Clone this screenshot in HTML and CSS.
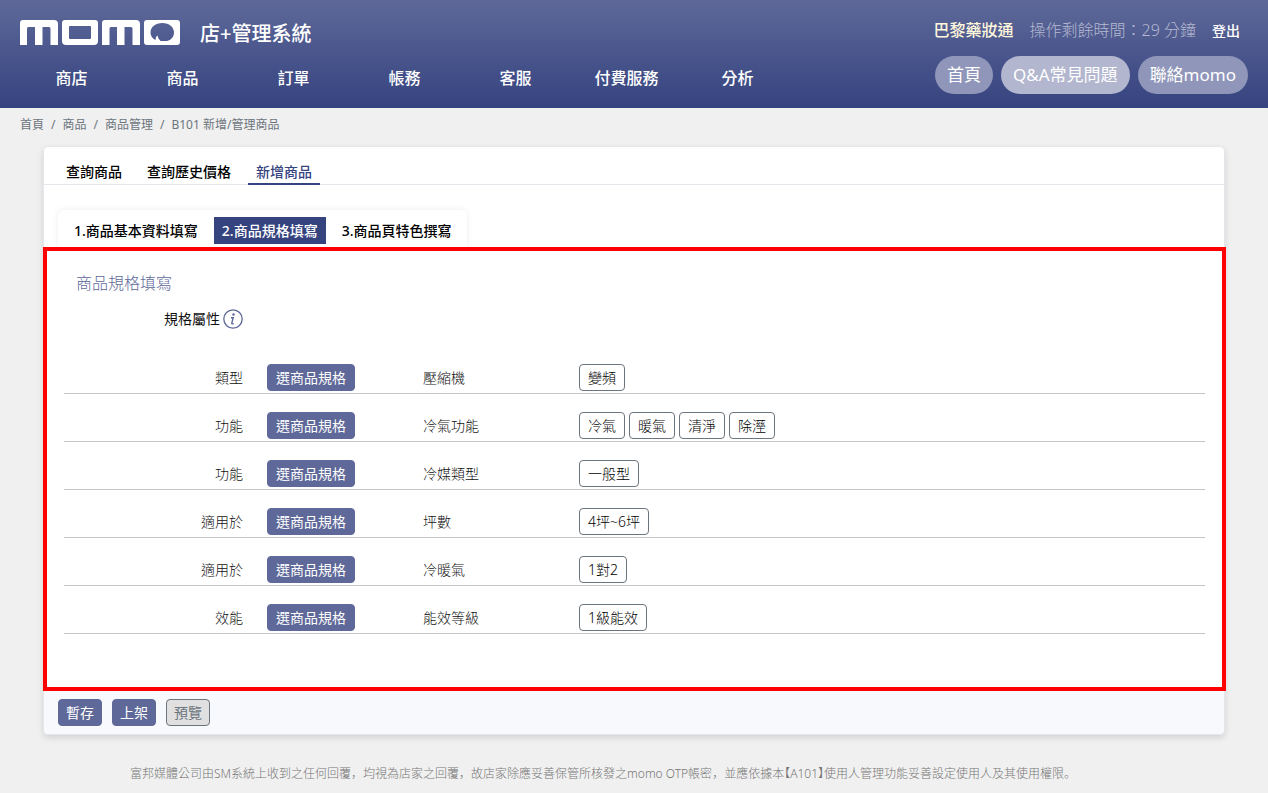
FILE: index.html
```html
<!DOCTYPE html>
<html lang="zh-Hant">
<head>
<meta charset="utf-8">
<meta name="viewport" content="width=device-width, initial-scale=1">
<title>momo 店+管理系統</title>
<link rel="stylesheet" href="styles.css">
</head>
<body>
<header class="header">
  <div class="header-main">
    <div class="brand">
      <svg class="logo" viewBox="0 0 161 25" role="img" aria-label="momo">
        <g fill="#fff" fill-rule="evenodd">
          <path d="M3 0H34Q38 0 38 4V25H30.500V8.500Q30.500 7 29 7H22.500V25H15V7H8.500Q7 7 7 8.500V25H0V3Q0 0 3 0Z"/>
          <path d="M45 0H75Q78 0 78 3V21Q78 25 74 25H46Q42 25 42 21V3Q42 0 45 0ZM50 6Q49 6 49 7V18Q49 19 50 19H70Q71 19 71 18V7Q71 6 70 6Z"/>
          <path d="M85 0H116Q120 0 120 4V25H112.500V8.500Q112.500 7 111 7H104.500V25H97V7H91Q89.500 7 89.500 8.500V25H82V3Q82 0 85 0Z"/>
          <path d="M127 0H157Q160 0 160 3V22Q160 25 157 25H127Q124 25 124 22V3Q124 0 127 0ZM135.500 20L136 17L137.500 15.500L138.500 18.500L140.500 21H147C151 20 154 17 154 12.500C154 7 149 3 142.500 3C135.500 3 130.500 7 130.500 12.500C130.500 16 132.500 18.500 135.500 20Z"/>
        </g>
      </svg>
      <span class="system-name">店+管理系統</span>
    </div>
    <nav class="nav" aria-label="主選單">
      <a href="#">商店</a>
      <a href="#">商品</a>
      <a href="#">訂單</a>
      <a href="#">帳務</a>
      <a href="#">客服</a>
      <a href="#">付費服務</a>
      <a href="#">分析</a>
    </nav>
  </div>
  <div class="header-side">
    <div class="account">
      <span class="shop">巴黎藥妝通</span>
      <span class="timer">操作剩餘時間：29 分鐘</span>
      <a class="logout" href="#">登出</a>
    </div>
    <div class="pills">
      <a class="pill" href="#">首頁</a>
      <a class="pill pill-light" href="#">Q&amp;A常見問題</a>
      <a class="pill" href="#">聯絡momo</a>
    </div>
  </div>
</header>

<nav class="breadcrumb" aria-label="目前位置">
  <a href="#">首頁</a><span>/</span><a href="#">商品</a><span>/</span><a href="#">商品管理</a><span>/</span><a href="#">B101 新增/管理商品</a>
</nav>

<main class="card">
  <nav class="tabs" aria-label="商品功能">
    <a href="#">查詢商品</a>
    <a href="#">查詢歷史價格</a>
    <a class="active" href="#">新增商品</a>
  </nav>
  <nav class="steps" aria-label="新增步驟">
    <a href="#">1.商品基本資料填寫</a>
    <a class="active" href="#">2.商品規格填寫</a>
    <a href="#">3.商品頁特色撰寫</a>
  </nav>
  <section class="spec">
    <h1 class="spec-title">商品規格填寫</h1>
    <div class="attr">
      <span>規格屬性</span>
      <svg class="info" viewBox="0 0 20 20" role="img" aria-label="說明">
        <circle cx="10" cy="10" r="9.200" fill="none" stroke="#5e6899" stroke-width="1.300"/>
        <circle cx="10.500" cy="5.500" r="1.200" fill="#5e6899"/>
        <path d="M8 8.700H10.200L8.800 14.200Q8.700 15.200 10.700 14.600" fill="none" stroke="#5e6899" stroke-width="1.400"/>
      </svg>
    </div>
    <div class="row"><span class="kind">類型</span><span><button class="btn btn-primary" type="button">選商品規格</button></span><span>壓縮機</span><span class="values"><button class="btn" type="button">變頻</button></span></div>
    <div class="row"><span class="kind">功能</span><span><button class="btn btn-primary" type="button">選商品規格</button></span><span>冷氣功能</span><span class="values"><button class="btn" type="button">冷氣</button><button class="btn" type="button">暖氣</button><button class="btn" type="button">清淨</button><button class="btn" type="button">除溼</button></span></div>
    <div class="row"><span class="kind">功能</span><span><button class="btn btn-primary" type="button">選商品規格</button></span><span>冷媒類型</span><span class="values"><button class="btn" type="button">一般型</button></span></div>
    <div class="row"><span class="kind">適用於</span><span><button class="btn btn-primary" type="button">選商品規格</button></span><span>坪數</span><span class="values"><button class="btn" type="button">4坪~6坪</button></span></div>
    <div class="row"><span class="kind">適用於</span><span><button class="btn btn-primary" type="button">選商品規格</button></span><span>冷暖氣</span><span class="values"><button class="btn" type="button">1對2</button></span></div>
    <div class="row"><span class="kind">效能</span><span><button class="btn btn-primary" type="button">選商品規格</button></span><span>能效等級</span><span class="values"><button class="btn" type="button">1級能效</button></span></div>
  </section>
  <div class="actions">
    <button class="btn btn-primary" type="button">暫存</button>
    <button class="btn btn-primary" type="button">上架</button>
    <button class="btn btn-muted" type="button" disabled>預覽</button>
  </div>
</main>

<footer class="footer">富邦媒體公司由SM系統上收到之任何回覆<span class="punct" lang="zh-Hans">，</span>均視為店家之回覆<span class="punct" lang="zh-Hans">，</span>故店家除應妥善保管所核發之momo OTP帳密<span class="punct" lang="zh-Hans">，</span>並應依據本<span class="bracket">【</span>A101<span class="bracket">】</span>使用人管理功能妥善設定使用人及其使用權限<span class="punct" lang="zh-Hans">。</span></footer>
</body>
</html>
```
FILE: styles.css
```css
* { box-sizing: border-box; }

body {
  margin: 0;
  background: #f0f0f0;
  color: #111;
  font: 300 14px/21px "Noto Sans", "Noto Sans CJK TC", sans-serif;
}

a { color: inherit; text-decoration: none; }

.header {
  display: flex;
  justify-content: space-between;
  height: 108px;
  padding: 20px 20px 0 16px;
  background: linear-gradient(#5e6899, #35437f);
  color: #fff;
}

.brand {
  display: flex;
  gap: 19px;
  height: 26px;
  padding-left: 4px;
}

.logo { width: 161px; height: 25px; }

.system-name {
  font-size: 20px;
  font-weight: 500;
  line-height: 28px;
}

.nav { display: flex; padding-top: 20px; }

.nav a {
  width: 111px;
  text-align: center;
  font-size: 16px;
  font-weight: 500;
  line-height: 24px;
}

.account {
  display: flex;
  justify-content: flex-end;
  gap: 16px;
  padding-right: 8px;
  font-size: 16px;
  line-height: 21px;
}

.shop { color: #fff8dc; font-weight: 500; }
.timer { color: #b4b9d0; }
.logout { font-size: 14px; font-weight: 500; }

.pills {
  display: flex;
  justify-content: flex-end;
  gap: 8px;
  padding-top: 15px;
}

.pill {
  padding: 0 12px;
  border-radius: 19px;
  background: #8f96b9;
  font-size: 17px;
  font-weight: 400;
  line-height: 38px;
}

.pill-light { background: #b2b6ce; }

.breadcrumb {
  display: flex;
  gap: 7px;
  padding: 8px 20px 12px;
  color: #6c757d;
  font-size: 12px;
  font-weight: 400;
  line-height: 18px;
}

.card {
  margin: 0 43px;
  border: 1px solid #e4e6ec;
  border-radius: 5px;
  background: #fff;
  box-shadow: 0 3px 6px #0000001f;
}

.tabs {
  display: flex;
  gap: 9px;
  padding: 14px 14px 0;
  border-bottom: 1px solid #e4e6ec;
  color: #000;
  font-weight: 500;
}

.tabs a {
  margin-bottom: -1px;
  padding: 0 8px 1px;
  border-bottom: 2px solid transparent;
}

.tabs .active { border-color: #35437f; color: #35437f; }

.steps {
  display: flex;
  gap: 8px;
  width: fit-content;
  margin: 25px 0 0 14px;
  padding: 7px 8px 3px;
  border-radius: 6px 6px 0 0;
  box-shadow: 0 0 6px #00000014;
  color: #000;
  font-weight: 500;
}

.steps a { padding: 0 8px; line-height: 27px; }
.steps .active { background: #35437f; color: #fff; }

.spec {
  position: relative;
  margin: 0 -2px 0 -1px;
  padding: 20px 17px 53px;
  border: 4px solid #f00;
  background: #fff;
}

.spec-title {
  margin: 0 0 13px;
  padding-left: 12px;
  color: #5e6899;
  font-size: 16px;
  font-weight: 300;
  line-height: 24px;
}

.attr {
  display: flex;
  align-items: center;
  gap: 3px;
  padding: 0 0 17px 100px;
  font-weight: 400;
}

.info { width: 20px; height: 20px; }

.row {
  display: grid;
  grid-template-columns: 203px 156px 156px 1fr;
  align-items: center;
  padding: 18px 0 2px;
  border-bottom: 1px solid #c4c4c4;
}

.kind { padding-right: 24px; text-align: right; }
.row > span { line-height: 27px; }

.values { display: flex; gap: 4px; }

.btn {
  display: block;
  height: 27px;
  padding: 0 8px;
  border: 1px solid #6c757d;
  border-radius: 4px;
  background: #fff;
  color: #000;
  font: inherit;
  line-height: 23px;
}

.btn-primary {
  border-color: #5e6899;
  background: #5e6899;
  color: #fff;
  font-weight: 400;
}

.btn-muted {
  background: #e0e0e0;
  color: #6c757d;
  font-weight: 400;
}

.actions {
  display: flex;
  gap: 10px;
  padding: 8px 14px;
  border-radius: 0 0 4px 4px;
  background: #f8f9fc;
}

.actions .btn { padding: 0 7px; }

.footer {
  padding: 29px 130px;
  color: #777;
  font-size: 12px;
  line-height: 18px;
}

.punct { font-family: "Noto Sans CJK SC", sans-serif; }
.bracket { font-feature-settings: "halt"; }
```
